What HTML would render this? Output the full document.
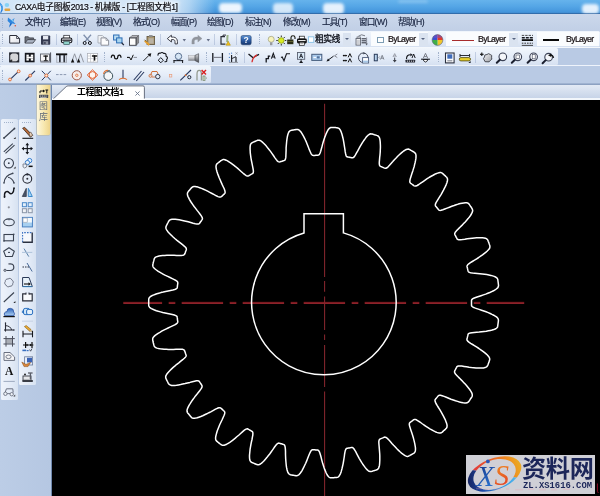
<!DOCTYPE html>
<html><head><meta charset="utf-8"><title>CAXA</title>
<style>

html,body{margin:0;padding:0}
body{width:600px;height:496px;overflow:hidden;background:#b8c9e3;font-family:"Liberation Sans","Noto Sans CJK SC",sans-serif;font-size:8.5px;color:#1b2542;line-height:1}
#app{position:relative;width:600px;height:496px;overflow:hidden;background:#b8c9e3}
.a{position:absolute}
.t{position:absolute;white-space:nowrap;letter-spacing:-0.35px;will-change:transform}
.tb{position:absolute;background:linear-gradient(#f1f6fc,#e4ecf8 55%,#d6e1f1);border-radius:1.5px}
.grip{position:absolute;width:1px;border-left:1px dotted #a3b3cc}
.sep{position:absolute;width:1px;background:rgba(140,160,195,.42)}
.combo{position:absolute;background:#fafcfe;height:14px;top:32px}
.dd{position:absolute;background:#dae3f0;width:7px;height:13px}
.dd:after{content:"";position:absolute;left:2.2px;top:5px;border:2.2px solid transparent;border-top:2.6px solid #55637f;border-bottom:0}
.ic{position:absolute;overflow:visible}

</style></head><body>
<svg width="0" height="0" style="position:absolute"><defs>
<linearGradient id="gHelp" x1="0" y1="0" x2="0" y2="1"><stop offset="0" stop-color="#5d92d2"/><stop offset=".5" stop-color="#2e5ea6"/><stop offset="1" stop-color="#15346a"/></linearGradient>
<linearGradient id="gCyl" x1="0" y1="0" x2="0" y2="1"><stop offset="0" stop-color="#f2f2f4"/><stop offset=".5" stop-color="#c4c6cb"/><stop offset="1" stop-color="#7c7f86"/></linearGradient>
<linearGradient id="gCone" x1="0" y1="0" x2="0" y2="1"><stop offset="0" stop-color="#d8d9dc"/><stop offset="1" stop-color="#4c4f56"/></linearGradient>
<linearGradient id="gCloud" x1="0" y1="0" x2="1" y2="1"><stop offset="0" stop-color="#f4f4f6"/><stop offset="1" stop-color="#9a9da4"/></linearGradient>
<linearGradient id="gBlue" x1="0" y1="0" x2="0" y2="1"><stop offset="0" stop-color="#2f66bd"/><stop offset="1" stop-color="#a9cdf0"/></linearGradient>
<linearGradient id="gPage" x1="0" y1="0" x2="1" y2="1"><stop offset="0" stop-color="#ffffff"/><stop offset="1" stop-color="#dfe1e8"/></linearGradient>
</defs></svg>
<div id="app">
<div class="a" style="left:0;top:0;width:600px;height:14px;background:linear-gradient(#66b3ec,#55a6e6 45%,#4596dc 85%,#3b80c2)"></div>
<div class="a" style="left:0;top:0;width:215px;height:14px;background:linear-gradient(90deg,rgba(214,231,247,.97) 0,rgba(216,232,248,.97) 80%,rgba(210,229,247,.7) 88%,rgba(180,214,244,0) 100%)"></div>
<div class="a" style="left:219px;top:2.5px;width:23px;height:10.5px;border-radius:4px;background:rgba(245,250,255,0.95);filter:blur(1.6px)"></div>
<div class="a" style="left:273px;top:3px;width:20px;height:10.5px;border-radius:4px;background:rgba(245,250,255,0.8);filter:blur(1.6px)"></div>
<div class="a" style="left:323px;top:3px;width:21px;height:10.5px;border-radius:4px;background:rgba(245,250,255,0.9);filter:blur(1.6px)"></div>
<div class="a" style="left:582px;top:4px;width:17px;height:9.5px;border-radius:4px;background:rgba(245,250,255,0.9);filter:blur(1.6px)"></div>
<div class="a" style="left:150px;top:1px;width:30px;height:4px;border-radius:4px;background:rgba(245,250,255,0.4);filter:blur(1.6px)"></div>
<div class="a" style="left:398px;top:0px;width:30px;height:3px;border-radius:4px;background:rgba(245,250,255,0.25);filter:blur(1.6px)"></div>
<div class="a" style="left:0;top:12.6px;width:600px;height:1px;background:rgba(40,90,150,.55)"></div>
<div class="a" style="left:0;top:13.5px;width:600px;height:1px;background:rgba(235,243,252,.9)"></div>
<div class="t" style="left:14.7px;top:2.9px;font-size:8.60px;color:#0a0a10;letter-spacing:-0.4px;-webkit-text-stroke:.22px #0a0a10;text-shadow:0 0 3px #fff,0 0 4px #fff;">CAXA<span style="letter-spacing:-0.1px">电子图板</span>2013 - <span style="letter-spacing:-0.1px">机械版</span> - [<span style="letter-spacing:-0.1px">工程图文档</span>1]</div>
<svg class="a" style="left:0;top:0" width="20" height="14" viewBox="0 0 20 14"><path d="M0,2.6Q5.4,7.4 1.4,12.8L0,12.8Q2.6,8 0,4.4Z" fill="#2f7fdc"/><path d="M.2,3.4Q3.4,6.4 1.8,10" stroke="#59b8f2" stroke-width=".9" fill="none"/><ellipse cx="6.9" cy="5" rx="2.3" ry="2" fill="#86d2f6"/><rect x="4.6" y="8.4" width="5.6" height="2.6" rx=".8" fill="#e29a2a" opacity=".9"/></svg>
<div class="a" style="left:0;top:13.9px;width:600px;height:17px;background:linear-gradient(#ccd8eb,#c5d3e8 60%,#c1cfe6)"></div>
<div class="grip" style="left:2px;top:18px;height:10px"></div>
<svg class="a" style="left:6px;top:15px" width="14" height="15" viewBox="6 15 14 15"><path d="M8,17.6L11.6,20.2L14.6,18L13.2,21.6L15.6,24L12.2,23.6L9,27.8L10,23.2L7.6,21Z" fill="#2f86de"/><path d="M11.4,20.4L13.6,19.2L12.6,21.8Z" fill="#7fd0f6"/><path d="M9.4,26.8L10.4,23.4L11.8,23.6Z" fill="#1b59b4"/><circle cx="15.3" cy="25.7" r=".8" fill="#e05030"/></svg>
<div class="t" style="left:24.6px;top:17.9px;font-size:8.60px;color:#18233f;-webkit-text-stroke:.18px #18233f;"><span style="letter-spacing:-0.87px">文件</span>(F)</div>
<div class="t" style="left:59.6px;top:17.9px;font-size:8.60px;color:#18233f;-webkit-text-stroke:.18px #18233f;"><span style="letter-spacing:-0.87px">编辑</span>(E)</div>
<div class="t" style="left:96.0px;top:17.9px;font-size:8.60px;color:#18233f;-webkit-text-stroke:.18px #18233f;"><span style="letter-spacing:-0.87px">视图</span>(V)</div>
<div class="t" style="left:133.0px;top:17.9px;font-size:8.60px;color:#18233f;-webkit-text-stroke:.18px #18233f;"><span style="letter-spacing:-0.87px">格式</span>(O)</div>
<div class="t" style="left:170.6px;top:17.9px;font-size:8.60px;color:#18233f;-webkit-text-stroke:.18px #18233f;"><span style="letter-spacing:-0.87px">幅面</span>(P)</div>
<div class="t" style="left:207.0px;top:17.9px;font-size:8.60px;color:#18233f;-webkit-text-stroke:.18px #18233f;"><span style="letter-spacing:-0.87px">绘图</span>(D)</div>
<div class="t" style="left:245.0px;top:17.9px;font-size:8.60px;color:#18233f;-webkit-text-stroke:.18px #18233f;"><span style="letter-spacing:-0.87px">标注</span>(N)</div>
<div class="t" style="left:283.0px;top:17.9px;font-size:8.60px;color:#18233f;-webkit-text-stroke:.18px #18233f;"><span style="letter-spacing:-0.87px">修改</span>(M)</div>
<div class="t" style="left:321.6px;top:17.9px;font-size:8.60px;color:#18233f;-webkit-text-stroke:.18px #18233f;"><span style="letter-spacing:-0.87px">工具</span>(T)</div>
<div class="t" style="left:359.0px;top:17.9px;font-size:8.60px;color:#18233f;-webkit-text-stroke:.18px #18233f;"><span style="letter-spacing:-0.87px">窗口</span>(W)</div>
<div class="t" style="left:398.0px;top:17.9px;font-size:8.60px;color:#18233f;-webkit-text-stroke:.18px #18233f;"><span style="letter-spacing:-0.87px">帮助</span>(H)</div>
<div class="a" style="left:0;top:31px;width:600px;height:54px;background:#b9cae4"></div>
<div class="tb" style="left:0;top:30.8px;width:600px;height:16.6px"></div>
<div class="tb" style="left:0;top:48.4px;width:557.5px;height:16.8px"></div>
<div class="tb" style="left:0;top:66px;width:210.5px;height:17.2px"></div>
<div class="a" style="left:0;top:47.4px;width:600px;height:1px;background:#f4f8fd"></div>
<div class="a" style="left:0;top:65.2px;width:600px;height:.8px;background:#eef3fb"></div>
<div class="grip" style="left:2px;top:34px;height:10px"></div>
<div class="grip" style="left:259px;top:34px;height:10px"></div>
<div class="grip" style="left:2px;top:52px;height:10px"></div>
<div class="grip" style="left:104px;top:52px;height:10px"></div>
<div class="grip" style="left:206px;top:52px;height:10px"></div>
<div class="grip" style="left:438px;top:52px;height:10px"></div>
<div class="grip" style="left:2px;top:70px;height:10px"></div>
<div class="sep" style="left:55.5px;top:34px;height:11px"></div>
<div class="sep" style="left:77px;top:34px;height:11px"></div>
<div class="sep" style="left:160px;top:34px;height:11px"></div>
<div class="sep" style="left:214px;top:34px;height:11px"></div>
<div class="sep" style="left:235.5px;top:34px;height:11px"></div>
<div class="sep" style="left:243.5px;top:52px;height:11px"></div>
<div class="sep" style="left:475px;top:52px;height:11px"></div>
<div class="t" style="left:315.4px;top:35.2px;font-size:8.80px;color:#0c0f18;letter-spacing:-0.53px;-webkit-text-stroke:.3px #0c0f18;">粗实线</div>
<div class="dd" style="left:342.6px;top:33px;width:8.4px"></div>
<div class="combo" style="left:371px;width:57px"></div>
<div class="a" style="left:377.2px;top:36.9px;width:5px;height:4.6px;background:#fff;border:.9px solid #7d9db4"></div>
<div class="t" style="left:388.0px;top:35.2px;font-size:8.70px;color:#140d10;letter-spacing:-0.62px;-webkit-text-stroke:.2px #140d10;">ByLayer</div>
<div class="dd" style="left:419px;top:33px;width:8.5px"></div>
<div class="combo" style="left:446px;width:72px"></div>
<div class="a" style="left:452px;top:39.9px;width:21.5px;height:1.1px;background:#a82c2c"></div>
<div class="t" style="left:478.0px;top:35.2px;font-size:8.70px;color:#140d10;letter-spacing:-0.62px;-webkit-text-stroke:.2px #140d10;">ByLayer</div>
<div class="dd" style="left:509.4px;top:33px;width:8.2px"></div>
<div class="combo" style="left:537px;width:62px"></div>
<div class="a" style="left:542.6px;top:39px;width:16.6px;height:2.1px;background:#0a0a0a"></div>
<div class="t" style="left:566.0px;top:35.2px;font-size:8.70px;color:#140d10;letter-spacing:-0.62px;-webkit-text-stroke:.2px #140d10;">ByLayer</div>
<div class="a" style="left:0;top:83.4px;width:600px;height:1.8px;background:linear-gradient(#a9bcd9,#8398ba)"></div>
<div class="a" style="left:52px;top:85px;width:548px;height:14.6px;background:linear-gradient(#e3eaf5,#d0dbec 60%,#c3d0e6)"></div>
<div class="a" style="left:52px;top:98.4px;width:548px;height:1.2px;background:#f2f6fb"></div>
<div class="a" style="left:0;top:85px;width:52px;height:411px;background:linear-gradient(90deg,#bccde6,#b5c7e2)"></div>
<div class="a" style="left:51px;top:85px;width:1px;height:411px;background:#6f87ad"></div>
<svg class="a" style="left:50px;top:84px" width="100" height="17" viewBox="0 0 100 17"><path d="M2.6,15.6 L16.2,2.6 Q17,1.9 18.2,1.9 L93,1.9 Q94.4,1.9 94.4,3.3 L94.4,15.6 Z" fill="#fff" stroke="#596172" stroke-width=".9"/><rect x="2" y="14.6" width="93" height="2" fill="#fff"/></svg>
<div class="t" style="left:77.0px;top:88.2px;font-size:8.90px;color:#000;font-weight:bold;"><span style="letter-spacing:-0.48px">工程图文档</span>1</div>
<svg class="a" style="left:134.8px;top:91.2px" width="5" height="5" viewBox="0 0 5 5"><path d="M.4,.4L4.6,4.6M4.6,.4L.4,4.6" stroke="#69748a" stroke-width=".9" fill="none"/></svg>
<div class="a" style="left:37.2px;top:85px;width:12.8px;height:49.8px;background:linear-gradient(90deg,#fdf6dc,#f7e7ae 55%,#eed48a);border-radius:0 0 1.5px 1.5px;box-shadow:0 0 0 .5px rgba(190,170,110,.6)"></div>
<div class="t" style="left:39.4px;top:102.4px;font-size:8.90px;color:#5c6676;">图</div>
<div class="t" style="left:39.4px;top:112.6px;font-size:8.90px;color:#5c6676;">库</div>
<div class="tb" style="left:1px;top:119px;width:16.8px;height:281.3px;background:linear-gradient(90deg,#eef3fb,#e3ebf7 60%,#d7e2f1)"></div>
<div class="tb" style="left:19.2px;top:119px;width:16.8px;height:265.5px;background:linear-gradient(90deg,#eef3fb,#e3ebf7 60%,#d7e2f1)"></div>
<div class="a" style="left:4px;top:122.3px;width:9px;height:1px;border-top:1px dotted #a3b3cc"></div>
<div class="a" style="left:22px;top:122.3px;width:9px;height:1px;border-top:1px dotted #a3b3cc"></div><svg class="a" style="left:0;top:0" width="600" height="496" viewBox="0 0 600 496"><path d="M9.7,35.5H16.6L19.6,38.5V43.1H9.7Z" fill="url(#gPage)" stroke="#2c2f3b" stroke-width="1" />
<path d="M16.6,35.5V38.5H19.6" fill="none" stroke="#2c2f3b" stroke-width="0.8" />
<path d="M25,43V36.8H28.4L29.4,37.9H33.6V39.6" fill="#70757f" stroke="#33363f" stroke-width="0.8" />
<path d="M25,43.1L27.6,39.6H35.6L33,43.1Z" fill="#aab3c3" stroke="#33363f" stroke-width="0.8" />
<rect x="41" y="35.5" width="9.2" height="9.2" fill="#343a50" rx="0.8" />
<rect x="43" y="36" width="5.2" height="3.4" fill="#e6e9f1" />
<rect x="43.4" y="41.2" width="4.8" height="3.5" fill="#8d93a3" />
<rect x="44.2" y="41.9" width="1.4" height="2.2" fill="#343a50" />
<rect x="63.8" y="35.3" width="5.6" height="3.2" fill="#fff" stroke="#1d1f27" stroke-width="0.7" />
<rect x="61.4" y="38" width="10.4" height="4.8" fill="#ebebef" stroke="#14161c" stroke-width="1.1" rx="1.6" />
<rect x="62.2" y="39.6" width="8.8" height="1.2" fill="#1a1c24" />
<rect x="63.8" y="41.6" width="5.6" height="3" fill="#8fd2ca" stroke="#27474a" stroke-width="0.6" />
<path d="M83.6,34.8L89.6,41.6" stroke="#7d8eab" stroke-width="1.3" fill="none" />
<path d="M91,34.8L85,41.6" stroke="#7d8eab" stroke-width="1.3" fill="none" />
<circle cx="84.7" cy="43" r="1.5" fill="none" stroke="#14161c" stroke-width="1" />
<circle cx="89.9" cy="43" r="1.5" fill="none" stroke="#14161c" stroke-width="1" />
<path d="M98,35.5H102.4L104.4,37.5V43H98Z" fill="#f0f2f5" stroke="#a0a4ae" stroke-width="0.8" />
<path d="M101,37.9H106L108.6,40.4V45.2H101Z" fill="#fcfcfd" stroke="#838791" stroke-width="0.9" />
<path d="M106,37.9V40.4H108.6" fill="none" stroke="#838791" stroke-width="0.7" />
<rect x="113.6" y="35" width="5.4" height="5" fill="#bcdef3" stroke="#2a6cb4" stroke-width="1" />
<rect x="116.6" y="37.9" width="5.4" height="5" fill="#a9d5ef" stroke="#2a6cb4" stroke-width="1" />
<path d="M121.6,42.6L123.8,45.2" stroke="#20283a" stroke-width="1.3" fill="none" />
<path d="M129.5,38L132,35.5H138.6L136,38Z" fill="#b4b4b8" stroke="#55575c" stroke-width="0.6" />
<path d="M136,38L138.6,35.5V43L136,45.3Z" fill="#8c8c8f" stroke="#55575c" stroke-width="0.6" />
<rect x="129.5" y="38" width="6.5" height="7.3" fill="#fdfdfd" stroke="#3a3c44" stroke-width="0.9" />
<rect x="147" y="36.5" width="7.6" height="8" fill="#a8946c" stroke="#5c5038" stroke-width="0.8" />
<rect x="149" y="35.1" width="3.6" height="1.9" fill="#8a8a8a" />
<rect x="148.6" y="38.2" width="5" height="5.4" fill="#bab2a2" />
<path d="M144.8,40.8L149.2,45" stroke="#e8a030" stroke-width="1.9" fill="none" />
<path d="M144.6,39.8L146.4,41.6" stroke="#6a5a30" stroke-width="1" fill="none" />
<path d="M167.3,38.6L171.4,35.2V37.1H173.4C176,37.1 177.4,39.4 177.4,41.4V43.9H175V41.6C175,40.4 174.4,39.6 173.2,39.6H171.4V42Z" fill="#fff" stroke="#2a2d38" stroke-width="0.9" stroke-linejoin="round"/>
<path d="M182.6,39L186,39L184.3,41.4Z" fill="#667088" />
<path d="M167.3,38.6L171.4,35.2V37.1H173.4C176,37.1 177.4,39.4 177.4,41.4V43.9H175V41.6C175,40.4 174.4,39.6 173.2,39.6H171.4V42Z" fill="#91959d" stroke="#91959d" stroke-width="0.4" transform="translate(369.3,0) scale(-1,1)"/>
<path d="M206.6,39L210,39L208.3,41.4Z" fill="#667088" />
<path d="M225,36.6H221V44.2H225.4" fill="none" stroke="#2a2d38" stroke-width="1.2" />
<path d="M223,36.6V35.1H226" fill="none" stroke="#2a2d38" stroke-width="1" />
<path d="M227.6,35L227.1,42" stroke="#9cb48c" stroke-width="2" fill="none" />
<path d="M226,45.2L228.2,41.2L230.4,45.2Z" fill="#f2c21c" stroke="#a88400" stroke-width="0.5" />
<rect x="241" y="35.5" width="10.2" height="9.3" fill="url(#gHelp)" stroke="#1b3763" stroke-width="0.5" rx="1.7" />
<text x="246.1" y="43.1" font-family="Liberation Sans,sans-serif" font-weight="bold" font-size="8.6" fill="#fff" text-anchor="middle">?</text>
<circle cx="271.2" cy="39.3" r="3" fill="#f7f3ba" stroke="#a6a686" stroke-width="0.8" />
<rect x="270" y="42.3" width="2.4" height="2.9" fill="#989a9e" />
<path d="M284.8,40.5L286.3,40.5" stroke="#1c1c10" stroke-width="0.9" fill="none" />
<path d="M283.775,42.9749L284.836,44.0355" stroke="#1c1c10" stroke-width="0.9" fill="none" />
<path d="M281.3,44L281.3,45.5" stroke="#1c1c10" stroke-width="0.9" fill="none" />
<path d="M278.825,42.9749L277.764,44.0355" stroke="#1c1c10" stroke-width="0.9" fill="none" />
<path d="M277.8,40.5L276.3,40.5" stroke="#1c1c10" stroke-width="0.9" fill="none" />
<path d="M278.825,38.0251L277.764,36.9645" stroke="#1c1c10" stroke-width="0.9" fill="none" />
<path d="M281.3,37L281.3,35.5" stroke="#1c1c10" stroke-width="0.9" fill="none" />
<path d="M283.775,38.0251L284.836,36.9645" stroke="#1c1c10" stroke-width="0.9" fill="none" />
<circle cx="281.3" cy="40.5" r="2.8" fill="#d8ec24" stroke="#8a9a10" stroke-width="0.8" />
<path d="M291,39.6V37.6Q291,35.8 293,35.8Q295,35.8 295,37.6V39" fill="none" stroke="#15160c" stroke-width="1.1" />
<rect x="287.2" y="39.5" width="6.2" height="4.7" fill="#2b2d16" />
<rect x="287.2" y="41.1" width="6.2" height="0.7" fill="#77793f" />
<rect x="299.3" y="36.2" width="5" height="2.8" fill="#fff" stroke="#111" stroke-width="0.7" />
<rect x="297" y="38.6" width="9.8" height="4.8" fill="#111" rx="1.4" />
<rect x="298.2" y="40.1" width="7.4" height="1" fill="#fff" />
<rect x="299.3" y="42.2" width="5" height="3.1" fill="#fff" stroke="#111" stroke-width="0.7" />
<path d="M300.3,43.6L303.3,43.6" stroke="#555" stroke-width="0.5" fill="none" />
<rect x="308.4" y="36.8" width="5.4" height="5.6" fill="#fff" stroke="#8fc4e6" stroke-width="1" />
<rect x="357" y="36.9" width="3.6" height="1.8" fill="#cfd1d6" stroke="#5a5f6a" stroke-width="0.6" />
<rect x="356" y="38.5" width="4.6" height="6.6" fill="#eaebee" stroke="#5a5f6a" stroke-width="0.8" />
<path d="M356.8,41L359.8,41" stroke="#8a8e98" stroke-width="0.6" fill="none" />
<path d="M356.8,43L359.8,43" stroke="#8a8e98" stroke-width="0.6" fill="none" />
<path d="M361.6,38.8L366,38.8" stroke="#2a2d38" stroke-width="1" fill="none" />
<path d="M361.6,40.8L366,40.8" stroke="#2a2d38" stroke-width="1" fill="none" />
<path d="M361.6,42.8L366,42.8" stroke="#2a2d38" stroke-width="1" fill="none" />
<path d="M358.4,36.2Q361.4,33.6 365,35.8" fill="none" stroke="#5a5f6a" stroke-width="0.8" />
<path d="M366.6,37.5V44.6" fill="none" stroke="#5a5f6a" stroke-width="0.7" />
<path d="M365.4,43.6L367.8,43.6L366.6,45.6Z" fill="#5a5f6a" />
<path d="M437.5,40L432.1,40A5.4,5.4 0 0 1 437.5,34.6Z" fill="#3b4fd0" />
<path d="M437.5,40L437.5,34.6A5.4,5.4 0 0 1 442.9,40Z" fill="#e23a2a" />
<path d="M437.5,40L442.9,40A5.4,5.4 0 0 1 437.5,45.4Z" fill="#f2c62a" />
<path d="M437.5,40L437.5,45.4A5.4,5.4 0 0 1 432.1,40Z" fill="#3fae48" />
<path d="M432.9,37.2A5.4,5.4 0 0 1 442.1,37.2Q437.5,39 432.9,37.2Z" fill="#7a50c0" stroke="none" stroke-width="0" opacity=".55"/>
<circle cx="437.5" cy="40" r="5.4" fill="none" stroke="#55607a" stroke-width="0.6" />
<path d="M521.8,35.4L533,35.4" stroke="#222" stroke-width="0.8" fill="none" stroke-dasharray="2.4 1"/>
<path d="M521.8,37.7L533,37.7" stroke="#15171d" stroke-width="1.6" fill="none" stroke-dasharray="3 1"/>
<path d="M521.8,40.1L533,40.1" stroke="#0c0c0c" stroke-width="1.8" fill="none" />
<path d="M521.8,43.2L533,43.2" stroke="#333" stroke-width="1" fill="none" stroke-dasharray="1.6 1"/>
<path d="M521.8,45.4L533,45.4" stroke="#333" stroke-width="0.9" fill="none" />
<rect x="9.7" y="52.9" width="9" height="9" fill="#d5d6d9" stroke="#23262f" stroke-width="1.1" />
<path d="M9.7,52.9L12.4,52.9L9.7,55.6Z" fill="#23262f" />
<path d="M18.7,52.9L16,52.9L18.7,55.6Z" fill="#23262f" />
<path d="M9.7,61.9L12.4,61.9L9.7,59.2Z" fill="#23262f" />
<path d="M18.7,61.9L16,61.9L18.7,59.2Z" fill="#23262f" />
<circle cx="11.7" cy="60.3" r="0.7" fill="#111" />
<rect x="24.8" y="52.8" width="9.8" height="9.5" fill="#15171d" />
<rect x="26.4" y="54.6" width="2.4" height="2.2" fill="#fff" />
<rect x="30.8" y="54.6" width="2.4" height="2.2" fill="#fff" />
<rect x="26.4" y="56.7" width="6.8" height="1.7" fill="#fff" />
<rect x="26.4" y="58.4" width="2.4" height="2.2" fill="#fff" />
<rect x="30.8" y="58.4" width="2.4" height="2.2" fill="#fff" />
<rect x="40.5" y="54" width="9" height="7.2" fill="#f5f5f7" stroke="#5e626c" stroke-width="0.9" />
<path d="M50.6,52.4L50.6,62.6" stroke="#4a4e58" stroke-width="1" fill="none" />
<rect x="43.4" y="55.5" width="4.6" height="1.2" fill="#111" />
<rect x="45.1" y="55.5" width="1.3" height="5" fill="#111" />
<rect x="43.8" y="60.3" width="4" height="0.9" fill="#111" />
<path d="M40.5,62.3L50.6,62.3" stroke="#8a8e98" stroke-width="0.8" fill="none" />
<rect x="56" y="53.4" width="11.2" height="1.9" fill="#111" />
<rect x="59" y="55" width="1.7" height="7.4" fill="#2e3139" />
<rect x="63.4" y="55" width="1.7" height="7.4" fill="#2e3139" />
<rect x="56.4" y="55" width="0.8" height="7.4" fill="#9a9ea8" />
<rect x="66.2" y="55" width="0.8" height="7.4" fill="#9a9ea8" />
<path d="M56.4,62.4L67,62.4" stroke="#9a9ea8" stroke-width="0.6" fill="none" />
<path d="M71.6,62.3L74.6,53.8L77.6,62.3" fill="none" stroke="#8b8f99" stroke-width="0.9" />
<path d="M71,62.6L72.7,58.6L74.3,62.6Z" fill="#111" />
<path d="M77.6,62.3L80.6,53.8L83.6,62.3" fill="none" stroke="#8b8f99" stroke-width="0.9" />
<path d="M77,62.6L78.7,58.6L80.3,62.6Z" fill="#111" />
<rect x="87.5" y="53.5" width="10.2" height="8.6" fill="#fff" stroke="#a8acb4" stroke-width="0.7" />
<path d="M87.5,56L97.7,56" stroke="#b8bcc4" stroke-width="0.6" fill="none" />
<path d="M87.5,58.6L97.7,58.6" stroke="#b8bcc4" stroke-width="0.6" fill="none" />
<path d="M90.5,53.5L90.5,62.1" stroke="#b8bcc4" stroke-width="0.6" fill="none" />
<path d="M93.5,53.5L93.5,62.1" stroke="#b8bcc4" stroke-width="0.6" fill="none" />
<rect x="92" y="55.3" width="5.2" height="1.4" fill="#111" />
<rect x="93.8" y="55.3" width="1.5" height="5.3" fill="#111" />
<path d="M111.3,57.8C111.3,54.4 114.5,54.4 114.5,57C114.5,59.6 117.8,59.6 117.8,57C117.8,54.4 121,54.4 121,57.8" fill="none" stroke="#111" stroke-width="1.25" />
<path d="M127,57.4L129.6,57.4" stroke="#111" stroke-width="1.1" fill="none" />
<path d="M129.4,57.2L131,60L133.3,54.8" fill="none" stroke="#111" stroke-width="1" />
<path d="M133.6,57.4L137,57.4" stroke="#8a8e98" stroke-width="1" fill="none" />
<path d="M143.3,61L149,55.3" stroke="#222" stroke-width="1" fill="none" />
<path d="M151.3,53.2L150.4,57.1L147.4,54.1Z" fill="#111" />
<path d="M158,55.6Q157.8,52.6 160.5,53.2Q162,51.7 163.6,53.4Q166.6,53 166,56Q168.6,57.6 166.6,59.6Q167.6,62.2 164.6,61.6" fill="none" stroke="#15171d" stroke-width="1.1" />
<path d="M158.2,60.2L160.8,57.7L163.4,60.2L160.8,62.8Z" fill="none" stroke="#15171d" stroke-width="1" />
<circle cx="178.5" cy="56.4" r="3.2" fill="#d6e6f5" stroke="#5a7090" stroke-width="1" />
<path d="M173.4,60.6L183.2,60.6" stroke="#15171d" stroke-width="1.1" fill="none" />
<path d="M174,60.6L174,63" stroke="#15171d" stroke-width="1" fill="none" />
<path d="M182.6,60.6L182.6,63" stroke="#15171d" stroke-width="1" fill="none" />
<path d="M177,59.4L176.2,60.6" stroke="#5a7090" stroke-width="0.8" fill="none" />
<path d="M180,59.4L180.8,60.6" stroke="#5a7090" stroke-width="0.8" fill="none" />
<rect x="188.5" y="55.4" width="6.6" height="5.2" fill="url(#gCyl)" stroke="#8a8c92" stroke-width="0.4" />
<path d="M195,55.4L198.6,53.7V62.4L195,60.6Z" fill="url(#gCone)" stroke="#3a3c42" stroke-width="0.6" />
<path d="M212.8,53L212.8,62" stroke="#15171d" stroke-width="1.3" fill="none" />
<path d="M222.4,53L222.4,62" stroke="#15171d" stroke-width="1.3" fill="none" />
<path d="M213.4,57.4L221.8,57.4" stroke="#7a7e88" stroke-width="1.1" fill="none" />
<path d="M231.6,55L231.6,62" stroke="#15171d" stroke-width="1.1" fill="none" />
<path d="M236,57L236,62" stroke="#15171d" stroke-width="1.1" fill="none" />
<path d="M231.8,58.6L236,56.6" stroke="#15171d" stroke-width="0.9" fill="none" />
<circle cx="229.4" cy="53.8" r="0.65" fill="#4a80c8" />
<circle cx="229.4" cy="57.4" r="0.65" fill="#4a80c8" />
<circle cx="229.4" cy="61" r="0.65" fill="#4a80c8" />
<circle cx="231.6" cy="53.2" r="0.6" fill="#4a80c8" />
<path d="M235.4,52.4L237.6,54.4" stroke="#8a8e98" stroke-width="0.7" fill="none" />
<path d="M237.6,52.4L235.4,54.4" stroke="#8a8e98" stroke-width="0.7" fill="none" />
<path d="M229,62.4L238,62.4" stroke="#8a8e98" stroke-width="0.9" fill="none" />
<path d="M248.5,54L253.4,58" stroke="#15171d" stroke-width="1.4" fill="none" />
<path d="M259,54.3L254,56.9" stroke="#15171d" stroke-width="1.3" fill="none" />
<path d="M252,62.2Q252.4,57.6 257,54.9" fill="none" stroke="#d83030" stroke-width="1.3" />
<path d="M266.2,62.4V58.6H268.4V56.2H270.2" fill="none" stroke="#15171d" stroke-width="1.3" />
<path d="M271.4,58.6L273.3,53.4L275.2,58.6M272,57H274.6" fill="none" stroke="#15171d" stroke-width="1.1" />
<path d="M281,57.6L282.2,57L284,60.8L286.5,53.8H290" fill="none" stroke="#15171d" stroke-width="1.1" />
<rect x="297.5" y="52.5" width="7.2" height="6.8" fill="#d9e9f7" stroke="#5a6070" stroke-width="0.9" />
<path d="M299.5,58L301.1,53.8L302.7,58M300.1,56.6H302.1" fill="none" stroke="#20232c" stroke-width="0.9" />
<path d="M301.1,59.3L301.1,60.6" stroke="#15171d" stroke-width="0.9" fill="none" />
<path d="M299.1,63.1L301.1,60.2L303.1,63.1Z" fill="#15171d" />
<rect x="311.8" y="54.3" width="10" height="6.1" fill="#a9c9ea" stroke="#465c7c" stroke-width="1" />
<path d="M313.4,57.4L316,57.4" stroke="#fff" stroke-width="1" fill="none" />
<rect x="317" y="56.3" width="2.6" height="2.1" fill="#54729c" />
<rect x="320" y="56.5" width="1" height="1.6" fill="#fff" />
<path d="M327.8,60.3L333.6,56.1" stroke="#15171d" stroke-width="1" fill="none" />
<path d="M326.4,61.4L329.7,60.7L328,58.5Z" fill="#15171d" />
<path d="M337.3,54L334.5,55.8L337.3,57.6" fill="none" stroke="#7a7e88" stroke-width="0.9" />
<path d="M343,55.6L346.6,55.6" stroke="#111" stroke-width="1" fill="none" />
<path d="M342.6,55.6L344.2,54.4L344.2,56.8Z" fill="#111" />
<path d="M347.2,55.6L345.6,54.4L345.6,56.8Z" fill="#111" />
<path d="M348.2,57.3L349.9,53.6L351.6,57.3" fill="none" stroke="#111" stroke-width="1" />
<path d="M343,60.6L346.6,60.6" stroke="#111" stroke-width="1" fill="none" />
<path d="M342.6,60.6L344.2,59.4L344.2,61.8Z" fill="#111" />
<path d="M347.2,60.6L345.6,59.4L345.6,61.8Z" fill="#111" />
<path d="M348.2,62.3L349.9,58.6L351.6,62.3" fill="none" stroke="#111" stroke-width="1" />
<circle cx="363.3" cy="57.8" r="4.8" fill="none" stroke="#3a4050" stroke-width="1" />
<path d="M363.2,52.2L365.6,53.3L363.4,54.4Z" fill="#3a4050" />
<rect x="362.6" y="57.6" width="6" height="5.4" fill="#fff" stroke="#4a5a78" stroke-width="0.9" />
<rect x="363.1" y="60.6" width="5" height="2" fill="#a8c8e8" />
<rect x="374.3" y="54.3" width="3" height="6.5" fill="#b9d5ef" stroke="#2a3a58" stroke-width="1" />
<path d="M379.8,56.4L378.8,57.5L379.8,58.6" fill="none" stroke="#7a7e88" stroke-width="0.7" />
<path d="M380.5,59.5L382.2,55.3L383.9,59.5M381.1,58.2H383.3" fill="none" stroke="#6a6e78" stroke-width="0.8" />
<path d="M393,57L394.7,53.6L396.4,57M393.6,56H395.8" fill="none" stroke="#8a8e98" stroke-width="0.8" />
<path d="M394.7,57.6L394.7,61" stroke="#3a3d46" stroke-width="1" fill="none" />
<path d="M392.8,60L396.6,60L394.7,62.4Z" fill="#3a3d46" />
<path d="M406.5,59Q406.4,54.6 410.6,54.8" fill="none" stroke="#15171d" stroke-width="1.1" />
<path d="M412.6,54.8L410.4,53.2L410.4,56.4Z" fill="#15171d" />
<path d="M412,58L413.6,54L415.2,58" fill="none" stroke="#15171d" stroke-width="1" />
<rect x="405.5" y="59.8" width="9.6" height="2.7" fill="#2a2d38" rx="0.5" />
<rect x="407" y="60.6" width="0.8" height="1.1" fill="#fff" />
<rect x="409" y="60.6" width="0.8" height="1.1" fill="#fff" />
<rect x="411" y="60.6" width="0.8" height="1.1" fill="#fff" />
<rect x="413" y="60.6" width="0.8" height="1.1" fill="#fff" />
<path d="M423.3,58.2L425.5,53.3L427.7,58.2M424.2,56.6H426.8" fill="none" stroke="#7a7e88" stroke-width="1" />
<path d="M421,59.2L430,59.2" stroke="#15171d" stroke-width="1" fill="none" />
<path d="M423,59.5Q425.5,64.6 428,59.5Z" fill="#fff" stroke="#15171d" stroke-width="0.9" />
<rect x="445.5" y="53" width="8.6" height="9.9" fill="#fdfdfd" stroke="#2a3040" stroke-width="1.1" />
<rect x="447.3" y="54.3" width="5" height="4.4" fill="#3f6cba" />
<rect x="447.3" y="60" width="5" height="1.5" fill="#a0a4ae" />
<path d="M460,55.5L469.6,55.5" stroke="#15171d" stroke-width="0.9" fill="none" />
<path d="M460,54L460,57" stroke="#15171d" stroke-width="0.9" fill="none" />
<path d="M469.6,54L469.6,57" stroke="#15171d" stroke-width="0.9" fill="none" />
<rect x="459.3" y="57.6" width="11.2" height="3.3" fill="#ead02a" stroke="#4a4410" stroke-width="0.8" rx="1.6" />
<path d="M468.4,63L470.6,63L470.6,60.9Z" fill="#15171d" />
<path d="M480,54.3L483.6,54.3" stroke="#111" stroke-width="1.1" fill="none" />
<path d="M481.8,52.5L481.8,56.1" stroke="#111" stroke-width="1.1" fill="none" />
<path d="M484.5,57Q484,54.2 487,54.5Q488.5,52.8 490.3,54.5Q492.5,55 491.6,57.3Q492.6,59.5 490.5,60.3Q489.5,62.6 487,61.8Q484.5,62.5 484.2,60Q482.6,58.3 484.5,57Z" fill="url(#gCloud)" stroke="#3a3d46" stroke-width="0.9" />
<circle cx="502.8" cy="56.8" r="3.8" fill="#f4f6fa" stroke="#3a4054" stroke-width="1.1" />
<path d="M499.9,59.7L496.8,62.8" stroke="#1c2030" stroke-width="2" fill="none" stroke-linecap="round"/>
<circle cx="517.8" cy="56.8" r="3.8" fill="#f4f6fa" stroke="#3a4054" stroke-width="1.1" />
<path d="M514.9,59.7L511.8,62.8" stroke="#1c2030" stroke-width="2" fill="none" stroke-linecap="round"/>
<rect x="516" y="55" width="3.6" height="3.5" fill="#fff" stroke="#5a6070" stroke-width="0.7" />
<circle cx="533.6" cy="56.8" r="3.8" fill="#f4f6fa" stroke="#3a4054" stroke-width="1.1" />
<path d="M530.7,59.7L527.6,62.8" stroke="#1c2030" stroke-width="2" fill="none" stroke-linecap="round"/>
<rect x="532.2" y="54.6" width="3" height="4.2" fill="#fff" stroke="#3a4054" stroke-width="0.6" />
<circle cx="548.6" cy="57.2" r="3.8" fill="#f4f6fa" stroke="#3a4054" stroke-width="1.1" />
<path d="M545.7,60.1L542.6,63.2" stroke="#1c2030" stroke-width="2" fill="none" stroke-linecap="round"/>
<path d="M550,55.2Q552.8,54.8 553.6,57.8" fill="none" stroke="#111" stroke-width="1.2" />
<path d="M548,55.2L551.2,53.4L551.2,57Z" fill="#111" />
<path d="M11,78.7L17.8,72.1" stroke="#2a3a60" stroke-width="1.1" fill="none" />
<circle cx="10" cy="79.5" r="1.4" fill="#fbe8dc" stroke="#e06a30" stroke-width="0.9" />
<circle cx="18.7" cy="71.3" r="1.4" fill="#fbe8dc" stroke="#e06a30" stroke-width="0.9" />
<path d="M25.3,80.5L35,70.8" stroke="#2a3a60" stroke-width="1.1" fill="none" />
<circle cx="30.2" cy="75.6" r="1.4" fill="#f8d8c4" stroke="#e06a30" stroke-width="0.9" />
<path d="M41.8,70.8L50.8,80.3" stroke="#2a3a60" stroke-width="1" fill="none" />
<path d="M50.8,70.8L41.8,80.3" stroke="#2a3a60" stroke-width="1" fill="none" />
<circle cx="46.3" cy="75.5" r="1.5" fill="#fbe8dc" stroke="#e06a30" stroke-width="0.9" />
<path d="M56,74.6L67,74.6" stroke="#8a98b0" stroke-width="1" fill="none" stroke-dasharray="2.6 1.2"/>
<circle cx="76.8" cy="75.3" r="4.6" fill="#f7edea" stroke="#9c5848" stroke-width="1" />
<circle cx="76.8" cy="75.3" r="1.2" fill="none" stroke="#e06a30" stroke-width="0.8" />
<path d="M92.5,69.8L97.8,75L92.5,80.2L87.2,75Z" fill="none" stroke="#e06030" stroke-width="1" />
<circle cx="92.5" cy="75" r="3.4" fill="#fdf4ee" stroke="#e06030" stroke-width="1" />
<circle cx="108.3" cy="76" r="4.4" fill="#f4f6f8" stroke="#3a5058" stroke-width="1" />
<path d="M103.6,74Q104,70.6 108,70.4" fill="none" stroke="#e07030" stroke-width="1.1" />
<path d="M108,70.6Q110,70 110.6,71.6" fill="none" stroke="#3a5058" stroke-width="0.8" />
<path d="M123,69.8L123,78.3" stroke="#2a3a60" stroke-width="1.1" fill="none" />
<path d="M119,79.6Q123,77 127,79.6" fill="none" stroke="#e07030" stroke-width="1.1" />
<path d="M133.8,80L141.5,71" stroke="#2a3a60" stroke-width="1.1" fill="none" />
<path d="M136.3,81L144,72" stroke="#2a3a60" stroke-width="1.1" fill="none" />
<path d="M150.6,75.4L152,71.5H157L158,74" fill="none" stroke="#d0703a" stroke-width="1" />
<circle cx="150.5" cy="75.8" r="1.5" fill="none" stroke="#d0703a" stroke-width="0.9" />
<path d="M151.8,77L155.6,77" stroke="#d0703a" stroke-width="0.9" fill="none" />
<circle cx="157.8" cy="76.6" r="2.2" fill="none" stroke="#303848" stroke-width="1" />
<rect x="169.4" y="74.4" width="2.4" height="2.6" fill="none" stroke="#ea9c78" stroke-width="0.7" />
<path d="M180.3,80.3L191,70" stroke="#2a3a60" stroke-width="1.1" fill="none" />
<circle cx="189.3" cy="77.2" r="1.6" fill="none" stroke="#20283a" stroke-width="1" />
<circle cx="185.6" cy="75.2" r="0.9" fill="#e07030" />
<path d="M197,80.6V74Q197,70.4 199.2,70.4Q201.4,70.4 201.4,74V80.6" fill="none" stroke="#929a8e" stroke-width="1.25" />
<path d="M201.6,70L206,74.4" stroke="#d82020" stroke-width="1.4" fill="none" />
<path d="M206,70L201.6,74.4" stroke="#d82020" stroke-width="1.4" fill="none" />
<rect x="203" y="76" width="2" height="4.4" fill="#d8e8d0" stroke="#7a8a70" stroke-width="0.8" />
<circle cx="206.4" cy="78" r="0.6" fill="#7a8a70" />
<path d="M40,93.2V91H43.4" fill="none" stroke="#111" stroke-width="1" />
<path d="M43,89.4L45.2,91L43,92.6Z" fill="#111" />
<path d="M45.4,90L48.2,90" stroke="#111" stroke-width="1" fill="none" />
<path d="M46.8,90L46.8,93.4" stroke="#111" stroke-width="1" fill="none" />
<rect x="39" y="94.8" width="9.2" height="3.3" fill="#4a4c52" rx="0.5" />
<rect x="40.2" y="95.6" width="0.9" height="0.9" fill="#e8e8e8" />
<rect x="42" y="95.6" width="0.9" height="0.9" fill="#e8e8e8" />
<rect x="43.8" y="95.6" width="0.9" height="0.9" fill="#e8e8e8" />
<rect x="45.6" y="95.6" width="0.9" height="0.9" fill="#e8e8e8" />
<rect x="40.2" y="97" width="6.4" height="0.6" fill="#e8e8e8" />
<path d="M4,138L14.5,128.5" stroke="#3a4250" stroke-width="1.2" fill="none" />
<circle cx="4" cy="138" r="0.9" fill="#3a4250" />
<circle cx="14.5" cy="128.5" r="0.9" fill="#3a4250" />
<path d="M13.6,138.9L15.6,138.9L15.6,136.9Z" fill="#222" />
<path d="M3.8,151.8L12.8,143.6" stroke="#3a4250" stroke-width="1.1" fill="none" />
<path d="M5.5,153.3L14.5,145.1" stroke="#3a4250" stroke-width="1.1" fill="none" />
<circle cx="8.8" cy="163.2" r="4.7" fill="none" stroke="#3a4250" stroke-width="1.1" />
<circle cx="8.8" cy="163.2" r="0.9" fill="#3a4250" />
<path d="M13.6,168.4L15.6,168.4L15.6,166.4Z" fill="#222" />
<path d="M4,183Q4.6,175.4 12.6,173.4" fill="none" stroke="#3a4250" stroke-width="1.1" />
<path d="M8,177.2Q12.4,178 14,183" fill="none" stroke="#3a4250" stroke-width="1.1" />
<circle cx="4" cy="183" r="0.8" fill="#3a4250" />
<circle cx="12.8" cy="173.4" r="0.8" fill="#3a4250" />
<circle cx="14" cy="183" r="0.8" fill="#3a4250" />
<path d="M4.6,197C3.8,191.2 7.2,190.6 9.2,192.8C11.2,195 13.8,193.2 13.9,188.4" fill="none" stroke="#15171d" stroke-width="1.4" />
<circle cx="4.5" cy="197" r="0.9" fill="#15171d" />
<circle cx="14" cy="188.2" r="0.9" fill="#15171d" />
<circle cx="8.8" cy="207.3" r="1.1" fill="#8a8e98" />
<ellipse cx="9" cy="222.3" rx="5.3" ry="3.4" fill="none" stroke="#3a4250" stroke-width="1.1"/>
<path d="M8,219.2L9,220.2L10,219.2" fill="none" stroke="#3a4250" stroke-width="0.8" />
<rect x="4" y="234.5" width="9.5" height="6.3" fill="none" stroke="#3a4250" stroke-width="1.1" />
<circle cx="13.8" cy="234.2" r="0.8" fill="#3a4250" />
<circle cx="4" cy="241" r="0.8" fill="#3a4250" />
<path d="M9,247.7L14.3,251.3L12.3,256.5H5.7L3.7,251.3Z" fill="none" stroke="#3a4250" stroke-width="1.1" />
<path d="M8,252.4L10,252.4" stroke="#3a4250" stroke-width="1" fill="none" />
<path d="M8.4,264Q13.6,263 13.8,267Q14,270.6 10,270.5H6.4" fill="none" stroke="#3a4250" stroke-width="1.2" />
<circle cx="5" cy="270.3" r="1.1" fill="none" stroke="#3a4250" stroke-width="0.9" />
<path d="M12.7,283.7A2.3,2.3 0 0 1 9.9,286.2A2.3,2.3 0 0 1 6.1,285.1A2.3,2.3 0 0 1 5.3,281.5A2.3,2.3 0 0 1 8.1,279.0A2.3,2.3 0 0 1 11.9,280.1A2.3,2.3 0 0 1 12.7,283.7Z" fill="none" stroke="#6a7080" stroke-width="1" />
<path d="M3.8,302L14,292.5" stroke="#3a4250" stroke-width="1.1" fill="none" />
<path d="M13.4,302.9L15.4,302.9L15.4,300.9Z" fill="#222" />
<path d="M4.6,315.6Q3.4,312 7,311.6Q7,308 10.6,308.4Q14,308.6 13.6,312Q15.2,313 14,315.6Z" fill="url(#gBlue)" stroke="#2a50a0" stroke-width="0.8" />
<path d="M3.4,316.6L14.8,316.6" stroke="#111" stroke-width="1.2" fill="none" />
<path d="M5.5,323L5.5,331.6" stroke="#2a2d38" stroke-width="1.1" fill="none" />
<path d="M4,330L14,330" stroke="#2a2d38" stroke-width="1.1" fill="none" />
<path d="M5.5,325.6Q10.6,326 11.6,330" fill="none" stroke="#2a2d38" stroke-width="1" />
<circle cx="5.5" cy="323" r="0.7" fill="#2a2d38" />
<circle cx="14" cy="330" r="0.7" fill="#2a2d38" />
<rect x="6.5" y="339" width="5.6" height="4.6" fill="#a8acb4" />
<path d="M6,336L6,346.6" stroke="#4a4e5a" stroke-width="1" fill="none" />
<path d="M12.5,336L12.5,346.6" stroke="#4a4e5a" stroke-width="1" fill="none" />
<path d="M3.5,338.6L14.8,338.6" stroke="#4a4e5a" stroke-width="1" fill="none" />
<path d="M3.5,344L14.8,344" stroke="#4a4e5a" stroke-width="1" fill="none" />
<path d="M4,352.5H10L14.6,357V360.4H4Z" fill="#f5f5f7" stroke="#6a7080" stroke-width="1" />
<ellipse cx="8.5" cy="356.8" rx="2.6" ry="1.8" fill="none" stroke="#6a7080" stroke-width=".9"/>
<text x="9.1" y="375.2" font-family="Liberation Serif,serif" font-weight="bold" font-size="11.5" fill="#111" text-anchor="middle">A</text>
<path d="M3.5,381.4L14.8,381.4" stroke="#8a98b0" stroke-width="0.8" fill="none" />
<path d="M5.2,392.4L6.4,388.8H12.8L13.2,392.6" fill="none" stroke="#6a7080" stroke-width="1" />
<path d="M7,393.6L10,393.6" stroke="#6a7080" stroke-width="0.9" fill="none" />
<circle cx="5.4" cy="393.8" r="1.7" fill="#eef2f8" stroke="#6a7080" stroke-width="0.9" />
<circle cx="11.7" cy="394.2" r="1.7" fill="#eef2f8" stroke="#6a7080" stroke-width="0.9" />
<path d="M13.4,396.4L15.2,396.4L15.2,394.6Z" fill="#333" />
<path d="M22.6,128.2L24.6,127.3L32.6,135.3L30.4,137Z" fill="#b86a38" stroke="#3a2a20" stroke-width="0.8" />
<path d="M29,133.6L30.8,132L32.6,135.3L30.4,137Z" fill="#e8d0b8" stroke="#3a2a20" stroke-width="0.5" />
<path d="M22.4,138.3L33.2,138.3" stroke="#15171d" stroke-width="1.1" fill="none" />
<path d="M27.3,144L27.3,153.4" stroke="#15171d" stroke-width="1.1" fill="none" />
<path d="M22.8,148.6L31.8,148.6" stroke="#15171d" stroke-width="1.1" fill="none" />
<path d="M27.3,142.8L25.5,145.2L29.1,145.2Z" fill="#15171d" />
<path d="M27.3,154.4L25.5,152L29.1,152Z" fill="#15171d" />
<path d="M21.6,148.6L24,146.8L24,150.4Z" fill="#15171d" />
<path d="M33,148.6L30.6,146.8L30.6,150.4Z" fill="#15171d" />
<circle cx="29.6" cy="160.6" r="2.2" fill="#e4f0fa" stroke="#3a80d0" stroke-width="1" />
<circle cx="27.4" cy="162.6" r="2.2" fill="#e4f0fa" stroke="#3a80d0" stroke-width="1" />
<path d="M23,164H27Q27.2,168 24.6,168Q22.4,168 23,164Z" fill="none" stroke="#7a7e88" stroke-width="0.9" />
<rect x="28.6" y="165.6" width="4" height="1.5" fill="#111" />
<circle cx="27.3" cy="178.8" r="4.4" fill="none" stroke="#2a2d38" stroke-width="1.1" />
<circle cx="27.3" cy="178.8" r="1" fill="#2a2d38" />
<path d="M26.6,172.8L29.6,174.4L26.8,175.8Z" fill="#2a2d38" />
<path d="M26.3,188.3V196.5H22.3Z" fill="#4a5468" stroke="#2a3040" stroke-width="0.7" />
<path d="M28.3,188.3V196.5H32.3Z" fill="#a8d4f2" stroke="#2a80c8" stroke-width="0.9" />
<rect x="22.4" y="202.7" width="4" height="4" fill="#e4f0fa" stroke="#4a88c8" stroke-width="1" />
<rect x="28.2" y="202.7" width="4" height="4" fill="#e4f0fa" stroke="#4a88c8" stroke-width="1" />
<rect x="22.4" y="208.7" width="4" height="4" fill="#f0f2f6" stroke="#8a96a8" stroke-width="1" />
<rect x="28.2" y="208.7" width="4" height="4" fill="#f0f2f6" stroke="#8a96a8" stroke-width="1" />
<rect x="22.4" y="217.4" width="10" height="9.5" fill="#a8d0f0" stroke="#4a80c0" stroke-width="1" />
<rect x="22.9" y="217.9" width="9" height="4.6" fill="#f4f9fd" />
<rect x="23" y="218" width="4.2" height="4.2" fill="#fff" stroke="#8a96a8" stroke-width="0.6" />
<rect x="22.6" y="232.6" width="9.6" height="9.6" fill="#f6f8fc" />
<path d="M22.6,242.2V232.6H32.2" fill="none" stroke="#3a70c0" stroke-width="1.1" stroke-dasharray="1.6 1.2"/>
<path d="M32.2,232.6V242.2H22.6" fill="none" stroke="#2a3040" stroke-width="1.4" />
<path d="M24,248.6L28.8,256.6" stroke="#5a80a8" stroke-width="1" fill="none" />
<path d="M22,252.4L32.3,252.4" stroke="#a8c0d8" stroke-width="0.9" fill="none" />
<path d="M27,263L32.2,271.5" stroke="#4a6a98" stroke-width="1" fill="none" />
<path d="M22.5,267L29,267" stroke="#2a3040" stroke-width="1" fill="none" stroke-dasharray="1.5 1"/>
<path d="M22.6,286.5V277.5H29L32.3,286.5Z" fill="#e8f2fa" stroke="#2a3a58" stroke-width="1" />
<path d="M24,284L29,284" stroke="#111" stroke-width="1.1" fill="none" />
<path d="M28.5,282.3L30.9,284L28.5,285.7Z" fill="#111" />
<path d="M22.6,286.7L32.3,286.7" stroke="#3a90d0" stroke-width="0.8" fill="none" />
<path d="M26,293.8H22.7V300.8H32.2V293.8H29" fill="#fafbfd" stroke="#2a2d38" stroke-width="1.2" />
<path d="M26,292.5L26,294.6" stroke="#2a2d38" stroke-width="1" fill="none" />
<path d="M29,292.5L29,294.6" stroke="#2a2d38" stroke-width="1" fill="none" />
<rect x="23.5" y="308.4" width="6" height="6.2" fill="#d0e6f8" stroke="#2a70c0" stroke-width="1" rx="1.6" />
<rect x="26.6" y="309.4" width="6" height="5.2" fill="#e4f0fa" stroke="#2a70c0" stroke-width="1" rx="1.6" />
<path d="M22.4,310.6L22.4,313" stroke="#2a70c0" stroke-width="0.9" fill="none" />
<path d="M22,321.2L33,321.2" stroke="#c0cde0" stroke-width="0.8" fill="none" />
<path d="M24.4,326.6L26.2,325.5L31,329.5L29.4,331Z" fill="#e8a834" stroke="#8a6010" stroke-width="0.6" />
<path d="M29.4,331L31,329.5L31.6,331.6Z" fill="#f0d8b0" stroke="#8a6010" stroke-width="0.4" />
<path d="M23,334L32.5,334" stroke="#15171d" stroke-width="1" fill="none" />
<path d="M23,330.8L23,337.3" stroke="#15171d" stroke-width="1.1" fill="none" />
<path d="M32.5,330.8L32.5,337.3" stroke="#15171d" stroke-width="1.1" fill="none" />
<path d="M25.6,342L25.6,348" stroke="#111" stroke-width="1.2" fill="none" />
<path d="M32,342L32,348" stroke="#111" stroke-width="1.2" fill="none" />
<path d="M23,345L33.4,345" stroke="#111" stroke-width="1" fill="none" />
<path d="M25.8,345L27.6,343.8L27.6,346.2Z" fill="#111" />
<path d="M31.8,345L30,343.8L30,346.2Z" fill="#111" />
<rect x="22.4" y="349.6" width="3.6" height="1.6" fill="#3a70c0" />
<rect x="26.6" y="350" width="2" height="1.2" fill="#3a70c0" />
<path d="M29.6,349.6L30.6,351.2L32,348.6" fill="none" stroke="#2a3040" stroke-width="0.8" />
<rect x="24.6" y="356.8" width="8" height="8.2" fill="#e8eef8" stroke="#6a7a98" stroke-width="0.8" />
<rect x="27" y="357.8" width="5" height="4.6" fill="#3a62b4" />
<path d="M21.8,362L26,364.4L30.6,362.4L28,366.6H24Z" fill="#d8853a" stroke="#8a4a10" stroke-width="0.5" />
<rect x="23" y="376" width="8" height="4.2" fill="#e4e6ea" stroke="#3a3d46" stroke-width="0.9" />
<rect x="22.4" y="380" width="10.4" height="2" fill="#3a3d46" />
<path d="M28,373L32.6,373" stroke="#5a5e68" stroke-width="1.3" fill="none" />
<path d="M30.4,373L30.4,379" stroke="#5a5e68" stroke-width="1.3" fill="none" />
<circle cx="25" cy="374.4" r="0.9" fill="#111" /></svg>
<div class="a" style="left:52px;top:99.6px;width:548px;height:396.4px;background:#000"></div>
<svg class="a" style="left:0;top:0" width="600" height="496" viewBox="0 0 600 496">
<path d="M123.3,302.3H524.2" stroke="#4e0a0c" stroke-width="1.1" stroke-dasharray="41.4 6.6 6.6 6.4" stroke-dashoffset="2.6" fill="none"/>
<path d="M123.3,303.15H524.2" stroke="#ba2e38" stroke-width="1.1" stroke-dasharray="41.4 6.6 6.6 6.4" stroke-dashoffset="2.6" fill="none"/>
<path d="M324.6,103.8V277M324.6,281V291.7M324.6,296.5V330M324.6,334.5V340M324.6,345V387M324.6,391.5V496" stroke="#86262e" stroke-width="1.05" fill="none"/>
<path d="M471.5,302.6 471.5,302.0 471.5,301.3 471.5,300.7 471.6,300.0 472.0,299.4 472.9,298.7 474.3,298.0 476.3,297.3 478.6,296.5 481.0,295.7 483.4,294.9 485.7,294.1 487.8,293.3 489.8,292.5 491.7,291.6 493.5,290.8 495.0,289.9 496.3,289.0 497.3,288.2 498.0,287.4 498.3,286.6 498.5,285.8 498.5,285.0 498.4,284.3 498.3,283.5 498.2,282.7 498.1,282.0 498.0,281.2 497.9,280.5 497.8,279.7 497.6,279.0 497.2,278.3 496.5,277.6 495.5,277.0 494.2,276.4 492.6,275.9 490.9,275.4 488.9,275.0 486.8,274.6 484.6,274.3 482.3,274.0 479.8,273.7 477.3,273.5 474.8,273.3 472.5,273.1 470.6,272.8 469.3,272.4 468.6,271.9 468.2,271.3 468.0,270.7 467.9,270.0 467.7,269.4 467.6,268.8 467.4,268.2 467.3,267.5 467.1,266.9 467.0,266.3 467.2,265.6 467.7,264.8 468.8,263.8 470.4,262.7 472.3,261.5 474.5,260.2 476.7,258.8 478.7,257.5 480.6,256.2 482.5,254.9 484.1,253.6 485.7,252.4 487.0,251.2 488.2,250.0 489.1,249.0 489.7,248.0 489.9,247.1 489.9,246.3 489.8,245.5 489.5,244.8 489.3,244.1 489.0,243.3 488.8,242.6 488.5,241.9 488.2,241.2 488.0,240.5 487.6,239.8 487.1,239.2 486.4,238.6 485.4,238.2 484.1,237.9 482.5,237.8 480.7,237.7 478.8,237.7 476.7,237.8 474.5,237.9 472.2,238.2 469.8,238.5 467.3,238.8 464.8,239.2 462.4,239.5 460.4,239.7 458.8,239.7 457.8,239.5 457.2,239.1 456.9,238.5 456.6,237.9 456.3,237.4 456.0,236.8 455.7,236.2 455.4,235.6 455.1,235.1 454.8,234.5 454.7,233.8 454.9,233.0 455.5,231.9 456.7,230.6 458.3,228.9 460.0,227.2 461.9,225.4 463.6,223.6 465.2,221.9 466.7,220.2 468.1,218.6 469.4,217.0 470.5,215.5 471.4,214.0 472.1,212.7 472.5,211.6 472.7,210.6 472.5,209.8 472.3,209.1 471.9,208.4 471.5,207.7 471.1,207.1 470.6,206.5 470.2,205.8 469.8,205.2 469.4,204.5 468.9,203.9 468.3,203.4 467.6,203.0 466.6,202.8 465.3,202.7 463.8,202.9 462.1,203.2 460.3,203.6 458.3,204.1 456.2,204.7 454.1,205.5 451.8,206.3 449.5,207.2 447.1,208.1 444.8,209.0 442.8,209.8 441.1,210.3 439.9,210.4 439.2,210.2 438.6,209.8 438.2,209.3 437.8,208.8 437.4,208.3 437.0,207.8 436.6,207.3 436.2,206.8 435.7,206.3 435.4,205.7 435.3,205.0 435.5,203.9 436.2,202.4 437.3,200.6 438.5,198.6 439.9,196.4 441.2,194.3 442.4,192.2 443.5,190.2 444.5,188.2 445.4,186.4 446.2,184.6 446.8,183.0 447.3,181.5 447.5,180.2 447.5,179.1 447.3,178.3 446.9,177.6 446.4,177.0 445.8,176.5 445.3,175.9 444.7,175.4 444.1,174.9 443.6,174.4 443.0,173.8 442.4,173.3 441.8,172.9 441.0,172.6 440.1,172.5 438.9,172.7 437.6,173.1 436.0,173.7 434.4,174.5 432.6,175.5 430.7,176.5 428.8,177.7 426.8,178.9 424.8,180.3 422.7,181.8 420.7,183.2 418.8,184.5 417.2,185.5 415.9,186.0 415.0,186.1 414.3,185.9 413.8,185.6 413.3,185.2 412.8,184.8 412.3,184.4 411.7,184.0 411.2,183.6 410.7,183.3 410.2,182.8 409.9,182.2 409.8,181.3 410.0,179.8 410.5,177.9 411.2,175.7 412.0,173.3 412.8,170.9 413.5,168.6 414.2,166.4 414.7,164.2 415.2,162.2 415.6,160.2 415.9,158.4 416.0,156.8 416.0,155.4 415.8,154.3 415.4,153.4 414.9,152.8 414.3,152.3 413.7,151.9 413.0,151.5 412.3,151.1 411.7,150.7 411.0,150.4 410.3,150.0 409.7,149.6 409.0,149.3 408.2,149.1 407.3,149.2 406.2,149.5 405.1,150.1 403.7,151.0 402.3,152.1 400.8,153.4 399.3,154.8 397.7,156.3 396.1,158.0 394.4,159.7 392.8,161.6 391.1,163.5 389.5,165.3 388.1,166.8 386.9,167.8 386.0,168.2 385.2,168.3 384.6,168.1 384.0,167.9 383.4,167.6 382.8,167.3 382.2,167.1 381.6,166.8 381.0,166.6 380.5,166.3 379.9,165.9 379.5,165.1 379.3,163.9 379.3,162.1 379.5,159.9 379.7,157.4 380.0,154.8 380.2,152.4 380.3,150.0 380.4,147.8 380.4,145.6 380.3,143.6 380.2,141.7 380.0,140.0 379.7,138.6 379.3,137.4 378.7,136.6 378.1,136.0 377.4,135.6 376.7,135.4 376.0,135.1 375.3,134.9 374.5,134.7 373.8,134.5 373.1,134.3 372.3,134.0 371.6,133.9 370.8,133.8 370.0,134.0 369.1,134.5 368.1,135.2 367.0,136.3 365.9,137.6 364.8,139.2 363.6,140.8 362.4,142.6 361.2,144.6 360.0,146.6 358.8,148.8 357.6,151.1 356.4,153.2 355.3,155.2 354.4,156.6 353.5,157.4 352.8,157.8 352.1,157.8 351.5,157.7 350.9,157.6 350.2,157.5 349.6,157.3 349.0,157.2 348.3,157.1 347.7,157.0 347.1,156.8 346.5,156.3 346.0,155.3 345.6,153.7 345.2,151.7 344.9,149.3 344.5,146.8 344.1,144.3 343.7,141.9 343.3,139.7 342.8,137.5 342.3,135.5 341.8,133.7 341.2,132.0 340.6,130.6 339.9,129.4 339.2,128.6 338.5,128.1 337.8,127.9 337.0,127.7 336.2,127.7 335.5,127.6 334.7,127.6 333.9,127.5 333.2,127.5 332.4,127.5 331.6,127.4 330.9,127.5 330.1,127.8 329.3,128.4 328.5,129.2 327.8,130.4 327.0,131.9 326.2,133.6 325.5,135.4 324.7,137.4 324.0,139.5 323.3,141.8 322.6,144.1 322.0,146.6 321.3,149.0 320.7,151.2 320.1,153.0 319.5,154.2 318.8,154.9 318.2,155.2 317.6,155.2 316.9,155.3 316.3,155.3 315.6,155.3 315.0,155.4 314.4,155.4 313.7,155.5 313.1,155.4 312.4,155.2 311.7,154.5 310.9,153.3 310.1,151.5 309.2,149.4 308.3,147.0 307.4,144.7 306.5,142.4 305.5,140.3 304.6,138.3 303.6,136.4 302.6,134.7 301.7,133.1 300.8,131.8 299.8,130.7 299.0,130.0 298.1,129.6 297.3,129.4 296.6,129.4 295.8,129.5 295.1,129.7 294.3,129.8 293.6,129.9 292.8,130.0 292.0,130.2 291.3,130.3 290.6,130.6 289.9,130.9 289.2,131.5 288.6,132.5 288.1,133.7 287.7,135.2 287.3,137.0 287.0,138.9 286.7,141.0 286.5,143.2 286.3,145.5 286.1,147.9 286.1,150.4 286.0,152.9 285.9,155.3 285.8,157.4 285.5,158.9 285.1,159.8 284.6,160.4 284.0,160.6 283.3,160.8 282.7,161.0 282.1,161.2 281.5,161.4 280.9,161.5 280.3,161.7 279.6,161.9 279.0,161.9 278.2,161.6 277.2,160.8 276.1,159.4 274.8,157.6 273.4,155.5 271.9,153.4 270.5,151.4 269.0,149.5 267.6,147.8 266.3,146.1 264.9,144.6 263.6,143.2 262.4,142.1 261.2,141.2 260.2,140.5 259.2,140.2 258.4,140.2 257.6,140.3 256.9,140.6 256.2,140.9 255.5,141.2 254.8,141.5 254.1,141.8 253.4,142.1 252.7,142.4 252.0,142.8 251.4,143.2 250.8,143.9 250.4,144.8 250.2,146.1 250.1,147.6 250.1,149.3 250.2,151.2 250.3,153.2 250.6,155.4 250.9,157.6 251.3,160.0 251.8,162.4 252.3,164.9 252.8,167.3 253.2,169.5 253.4,171.2 253.3,172.4 253.0,173.1 252.5,173.6 251.9,173.9 251.4,174.2 250.8,174.5 250.3,174.9 249.7,175.2 249.1,175.5 248.6,175.8 248.0,176.1 247.2,176.0 246.2,175.6 244.9,174.7 243.2,173.3 241.4,171.7 239.5,170.0 237.7,168.4 235.8,166.8 234.0,165.4 232.3,164.1 230.6,162.8 229.0,161.8 227.5,160.9 226.1,160.2 224.9,159.7 223.8,159.5 223.0,159.6 222.2,159.9 221.6,160.3 220.9,160.7 220.3,161.2 219.7,161.6 219.1,162.1 218.5,162.6 217.9,163.0 217.3,163.5 216.7,164.1 216.3,164.8 216.1,165.7 216.0,166.9 216.2,168.3 216.5,169.9 217.0,171.7 217.6,173.6 218.4,175.6 219.2,177.7 220.1,179.8 221.1,182.1 222.1,184.4 223.2,186.7 224.2,188.8 224.8,190.5 225.1,191.8 225.1,192.8 224.8,193.4 224.4,193.9 223.9,194.3 223.4,194.7 222.9,195.2 222.5,195.6 222.0,196.1 221.5,196.5 221.0,196.9 220.4,197.1 219.4,197.1 218.0,196.6 216.3,195.8 214.2,194.7 212.0,193.5 209.8,192.3 207.6,191.2 205.5,190.1 203.5,189.2 201.5,188.4 199.7,187.7 198.0,187.1 196.4,186.7 195.0,186.5 193.9,186.5 193.0,186.7 192.3,187.1 191.7,187.6 191.2,188.1 190.7,188.7 190.2,189.3 189.7,189.9 189.2,190.5 188.7,191.1 188.2,191.7 187.8,192.3 187.5,193.0 187.4,193.9 187.5,195.0 187.9,196.3 188.6,197.7 189.4,199.3 190.4,201.0 191.5,202.8 192.8,204.6 194.1,206.5 195.6,208.4 197.1,210.4 198.7,212.4 200.1,214.3 201.3,215.9 202.1,217.3 202.4,218.3 202.4,219.0 202.1,219.6 201.7,220.1 201.4,220.7 201.0,221.2 200.6,221.7 200.3,222.3 199.9,222.8 199.6,223.3 199.1,223.8 198.3,224.0 197.0,224.0 195.3,223.7 193.1,223.2 190.7,222.5 188.2,221.8 185.8,221.2 183.5,220.7 181.3,220.2 179.2,219.8 177.2,219.5 175.3,219.3 173.6,219.2 172.1,219.3 170.9,219.5 170.0,219.9 169.3,220.4 168.9,221.0 168.5,221.6 168.1,222.3 167.8,223.0 167.4,223.7 167.1,224.4 166.7,225.0 166.4,225.7 166.1,226.4 165.9,227.2 165.9,228.1 166.2,229.0 166.8,230.1 167.7,231.4 168.8,232.7 170.1,234.1 171.6,235.5 173.1,237.0 174.8,238.5 176.7,240.1 178.6,241.6 180.6,243.2 182.5,244.7 184.2,246.1 185.5,247.3 186.2,248.3 186.4,249.1 186.3,249.7 186.1,250.3 185.8,250.9 185.6,251.5 185.4,252.2 185.2,252.8 185.0,253.4 184.7,254.0 184.4,254.5 183.8,255.0 182.8,255.3 181.2,255.5 179.0,255.5 176.6,255.4 174.1,255.3 171.6,255.3 169.2,255.3 166.9,255.3 164.7,255.4 162.6,255.6 160.7,255.8 159.0,256.1 157.5,256.4 156.2,256.9 155.3,257.4 154.7,258.0 154.3,258.7 154.1,259.4 153.9,260.2 153.7,260.9 153.5,261.7 153.3,262.4 153.1,263.2 153.0,263.9 152.8,264.7 152.8,265.4 152.9,266.2 153.3,267.1 154.0,268.0 155.1,269.0 156.4,270.0 157.9,271.1 159.6,272.1 161.4,273.2 163.4,274.3 165.5,275.4 167.7,276.4 170.0,277.5 172.3,278.6 174.3,279.6 176.0,280.5 177.1,281.3 177.6,282.0 177.8,282.7 177.8,283.3 177.7,284.0 177.6,284.6 177.5,285.3 177.4,285.9 177.4,286.5 177.3,287.2 177.2,287.8 176.8,288.4 176.0,289.0 174.7,289.5 172.8,290.0 170.5,290.5 168.1,291.0 165.6,291.5 163.2,292.1 160.9,292.6 158.8,293.2 156.8,293.8 154.9,294.5 153.2,295.1 151.7,295.8 150.5,296.5 149.7,297.3 149.1,298.0 148.8,298.8 148.7,299.5 148.7,300.3 148.7,301.1 148.7,301.8 148.7,302.6 148.7,303.4 148.7,304.1 148.7,304.9 148.8,305.7 149.0,306.4 149.5,307.2 150.3,307.9 151.4,308.6 152.9,309.3 154.5,310.0 156.4,310.7 158.3,311.3 160.5,311.9 162.7,312.5 165.1,313.0 167.5,313.5 170.0,314.0 172.3,314.5 174.3,315.0 175.8,315.6 176.6,316.1 177.1,316.7 177.2,317.4 177.3,318.0 177.4,318.7 177.4,319.3 177.5,319.9 177.6,320.6 177.7,321.2 177.8,321.9 177.6,322.5 177.2,323.2 176.2,324.0 174.7,324.9 172.6,325.9 170.4,326.9 168.1,328.0 165.8,329.1 163.7,330.1 161.7,331.2 159.9,332.3 158.1,333.3 156.6,334.4 155.2,335.4 154.1,336.4 153.3,337.3 152.8,338.2 152.7,339.0 152.7,339.8 152.8,340.6 153.0,341.3 153.1,342.0 153.3,342.8 153.5,343.5 153.7,344.3 153.9,345.0 154.1,345.8 154.4,346.4 155.0,347.1 155.9,347.7 157.0,348.1 158.5,348.5 160.2,348.8 162.1,349.0 164.1,349.2 166.3,349.3 168.5,349.4 170.9,349.4 173.4,349.4 176.0,349.3 178.4,349.2 180.6,349.2 182.4,349.3 183.5,349.6 184.2,350.1 184.5,350.6 184.7,351.2 185.0,351.8 185.2,352.4 185.4,353.0 185.6,353.7 185.8,354.3 186.1,354.9 186.2,355.5 186.0,356.3 185.4,357.2 184.3,358.3 182.7,359.7 180.8,361.2 178.8,362.8 176.8,364.3 175.0,365.9 173.2,367.4 171.6,368.9 170.2,370.3 168.8,371.7 167.7,373.0 166.7,374.3 166.1,375.4 165.7,376.4 165.7,377.3 165.8,378.1 166.1,378.8 166.4,379.5 166.7,380.2 167.1,380.8 167.4,381.5 167.8,382.2 168.1,382.9 168.5,383.6 168.9,384.2 169.6,384.7 170.4,385.1 171.6,385.4 173.0,385.4 174.7,385.4 176.5,385.2 178.5,384.9 180.6,384.6 182.8,384.1 185.1,383.6 187.4,383.0 189.9,382.4 192.3,381.7 194.5,381.2 196.4,380.8 197.8,380.7 198.7,380.9 199.2,381.3 199.6,381.9 199.9,382.4 200.3,382.9 200.6,383.5 201.0,384.0 201.4,384.5 201.7,385.1 202.0,385.7 202.1,386.4 201.9,387.3 201.2,388.6 200.1,390.2 198.7,392.0 197.1,394.0 195.5,395.9 194.1,397.9 192.7,399.8 191.4,401.6 190.3,403.4 189.2,405.1 188.4,406.7 187.7,408.1 187.2,409.5 187.0,410.6 187.1,411.5 187.3,412.3 187.7,412.9 188.2,413.5 188.7,414.1 189.2,414.7 189.7,415.3 190.2,415.9 190.7,416.5 191.2,417.1 191.7,417.6 192.4,418.0 193.3,418.3 194.4,418.3 195.7,418.1 197.2,417.8 198.9,417.2 200.8,416.5 202.7,415.7 204.7,414.8 206.8,413.8 208.9,412.7 211.2,411.6 213.4,410.4 215.5,409.2 217.3,408.3 218.8,407.8 219.8,407.7 220.5,407.9 221.1,408.3 221.5,408.7 222.0,409.1 222.5,409.6 222.9,410.0 223.4,410.5 223.9,410.9 224.3,411.4 224.7,411.9 224.8,412.8 224.6,414.0 223.9,415.7 223.0,417.7 222.0,420.0 220.9,422.3 219.8,424.5 218.9,426.7 218.1,428.8 217.3,430.8 216.7,432.8 216.2,434.6 215.8,436.2 215.6,437.7 215.6,438.9 215.8,439.9 216.2,440.6 216.7,441.2 217.3,441.7 217.9,442.2 218.5,442.6 219.1,443.1 219.7,443.6 220.3,444.0 220.9,444.5 221.6,444.9 222.3,445.2 223.1,445.3 224.2,445.2 225.4,444.8 226.7,444.2 228.2,443.3 229.8,442.3 231.5,441.1 233.2,439.8 235.0,438.4 236.8,436.8 238.7,435.2 240.6,433.5 242.4,431.9 244.1,430.4 245.5,429.4 246.6,428.9 247.4,428.8 248.0,429.0 248.6,429.4 249.1,429.7 249.7,430.0 250.2,430.3 250.8,430.7 251.4,431.0 251.9,431.3 252.4,431.7 252.8,432.4 252.9,433.5 252.8,435.1 252.4,437.2 252.0,439.5 251.4,442.0 250.9,444.5 250.5,446.8 250.1,449.1 249.9,451.3 249.7,453.3 249.5,455.3 249.5,457.0 249.6,458.6 249.8,459.9 250.2,460.9 250.7,461.6 251.3,462.1 252.0,462.5 252.7,462.8 253.4,463.1 254.1,463.4 254.8,463.7 255.5,464.0 256.2,464.3 256.9,464.6 257.7,464.8 258.5,464.8 259.4,464.5 260.4,464.0 261.6,463.1 262.8,462.0 264.1,460.7 265.4,459.2 266.8,457.6 268.2,455.8 269.7,454.0 271.1,452.0 272.6,449.9 274.0,447.8 275.3,446.0 276.5,444.5 277.5,443.6 278.3,443.2 279.0,443.1 279.6,443.3 280.3,443.5 280.9,443.7 281.5,443.8 282.1,444.0 282.7,444.2 283.3,444.4 283.9,444.6 284.5,445.1 284.9,446.0 285.2,447.4 285.4,449.3 285.5,451.6 285.5,454.2 285.6,456.7 285.7,459.1 285.9,461.5 286.1,463.7 286.3,465.8 286.6,467.7 287.0,469.5 287.4,471.1 287.9,472.4 288.5,473.4 289.1,474.0 289.8,474.5 290.5,474.7 291.3,474.9 292.0,475.0 292.8,475.2 293.6,475.3 294.3,475.4 295.1,475.5 295.8,475.7 296.6,475.7 297.4,475.6 298.2,475.2 299.1,474.6 300.0,473.6 300.9,472.3 301.9,470.8 302.8,469.1 303.8,467.2 304.7,465.3 305.7,463.2 306.7,460.9 307.6,458.6 308.5,456.2 309.4,454.0 310.3,452.2 311.0,450.8 311.7,450.1 312.4,449.7 313.1,449.7 313.7,449.7 314.4,449.8 315.0,449.8 315.6,449.9 316.3,449.9 316.9,449.9 317.6,450.0 318.2,450.2 318.8,450.8 319.4,451.8 320.0,453.5 320.7,455.7 321.3,458.1 321.9,460.6 322.6,463.0 323.3,465.2 324.0,467.4 324.7,469.4 325.5,471.3 326.2,473.0 327.0,474.5 327.8,475.8 328.6,476.7 329.3,477.3 330.1,477.7 330.9,477.8 331.6,477.8 332.4,477.7 333.2,477.7 333.9,477.7 334.7,477.6 335.5,477.6 336.2,477.5 337.0,477.4 337.7,477.2 338.5,476.8 339.2,476.0 339.8,474.9 340.5,473.6 341.1,471.9 341.6,470.1 342.1,468.2 342.6,466.0 343.1,463.8 343.5,461.5 343.9,459.0 344.3,456.5 344.6,454.0 345.0,451.9 345.4,450.2 345.9,449.1 346.5,448.5 347.1,448.3 347.7,448.2 348.3,448.1 349.0,448.0 349.6,447.9 350.2,447.7 350.9,447.6 351.5,447.5 352.2,447.5 352.9,447.8 353.7,448.5 354.6,449.9 355.7,451.7 356.8,453.8 358.0,456.1 359.2,458.3 360.4,460.3 361.6,462.3 362.8,464.2 364.0,465.9 365.1,467.4 366.2,468.8 367.3,469.9 368.3,470.8 369.2,471.3 370.0,471.5 370.8,471.5 371.6,471.4 372.3,471.2 373.1,470.9 373.8,470.7 374.5,470.5 375.3,470.3 376.0,470.1 376.7,469.8 377.4,469.5 378.0,468.9 378.6,468.2 379.0,467.1 379.4,465.7 379.6,464.0 379.7,462.2 379.8,460.2 379.8,458.1 379.8,455.8 379.7,453.5 379.5,451.0 379.3,448.5 379.1,446.0 378.9,443.7 378.8,441.8 379.0,440.5 379.4,439.6 379.9,439.2 380.4,438.9 381.0,438.6 381.6,438.4 382.2,438.1 382.8,437.9 383.4,437.6 384.0,437.3 384.6,437.1 385.3,437.2 386.2,437.5 387.3,438.4 388.7,439.8 390.3,441.5 391.9,443.4 393.6,445.3 395.3,447.1 396.9,448.8 398.5,450.4 400.0,451.8 401.5,453.1 402.9,454.2 404.3,455.2 405.5,455.9 406.6,456.2 407.5,456.4 408.3,456.2 409.0,455.9 409.7,455.6 410.3,455.2 411.0,454.8 411.7,454.5 412.3,454.1 413.0,453.7 413.6,453.3 414.3,452.8 414.8,452.2 415.2,451.4 415.4,450.4 415.5,449.0 415.4,447.4 415.1,445.7 414.8,443.8 414.3,441.7 413.8,439.6 413.2,437.3 412.5,435.0 411.7,432.6 410.9,430.2 410.2,428.0 409.6,426.0 409.3,424.5 409.4,423.4 409.7,422.8 410.2,422.3 410.7,421.9 411.2,421.6 411.7,421.2 412.3,420.8 412.8,420.4 413.3,420.0 413.8,419.6 414.4,419.4 415.3,419.4 416.4,419.8 418.0,420.8 419.9,422.0 421.9,423.5 424.0,425.0 426.0,426.3 428.0,427.6 429.9,428.8 431.8,429.9 433.6,430.9 435.2,431.7 436.8,432.4 438.2,432.8 439.4,433.1 440.4,433.0 441.2,432.8 441.9,432.4 442.5,431.9 443.0,431.4 443.6,430.8 444.1,430.3 444.7,429.8 445.3,429.3 445.8,428.7 446.3,428.2 446.8,427.5 447.0,426.7 447.1,425.7 446.9,424.4 446.5,423.0 445.9,421.4 445.2,419.6 444.3,417.8 443.3,415.8 442.2,413.8 441.1,411.8 439.8,409.6 438.4,407.5 437.1,405.4 436.0,403.5 435.3,401.9 435.0,400.8 435.0,400.0 435.3,399.4 435.7,398.9 436.2,398.4 436.6,397.9 437.0,397.4 437.4,396.9 437.8,396.4 438.2,395.9 438.7,395.5 439.5,395.3 440.5,395.3 442.1,395.7 444.1,396.4 446.3,397.3 448.7,398.3 451.0,399.2 453.3,400.0 455.5,400.8 457.6,401.4 459.5,402.0 461.4,402.4 463.2,402.8 464.7,403.0 466.0,403.0 467.1,402.8 467.8,402.4 468.4,401.9 468.9,401.3 469.4,400.7 469.8,400.0 470.2,399.4 470.6,398.7 471.1,398.1 471.5,397.5 471.9,396.8 472.2,396.1 472.3,395.3 472.2,394.3 471.9,393.2 471.2,391.9 470.4,390.5 469.3,389.0 468.1,387.5 466.7,385.8 465.2,384.1 463.6,382.4 461.9,380.6 460.1,378.8 458.4,377.1 456.8,375.4 455.5,374.0 454.8,372.9 454.5,372.0 454.6,371.3 454.8,370.7 455.1,370.1 455.4,369.6 455.7,369.0 456.0,368.4 456.3,367.8 456.6,367.3 456.9,366.7 457.5,366.3 458.4,366.0 459.8,365.9 461.8,366.1 464.1,366.4 466.6,366.8 469.1,367.2 471.5,367.5 473.8,367.7 476.0,367.9 478.1,368.0 480.1,368.1 481.9,368.0 483.6,367.9 484.9,367.6 486.0,367.2 486.8,366.7 487.3,366.1 487.7,365.4 488.0,364.7 488.2,364.0 488.5,363.3 488.8,362.6 489.0,361.9 489.3,361.1 489.5,360.4 489.7,359.7 489.7,358.9 489.5,358.0 489.0,357.0 488.2,356.0 487.1,354.8 485.8,353.6 484.3,352.4 482.6,351.1 480.8,349.8 478.9,348.5 476.9,347.2 474.8,345.8 472.6,344.5 470.6,343.3 468.9,342.1 467.7,341.1 467.1,340.3 466.9,339.6 467.0,338.9 467.1,338.3 467.3,337.7 467.4,337.0 467.6,336.4 467.7,335.8 467.9,335.2 468.0,334.5 468.3,333.9 469.0,333.4 470.2,333.0 472.0,332.7 474.2,332.5 476.7,332.3 479.2,332.1 481.7,331.8 484.0,331.5 486.3,331.2 488.4,330.8 490.4,330.4 492.2,330.0 493.8,329.5 495.2,329.0 496.3,328.3 497.0,327.7 497.5,327.0 497.7,326.2 497.8,325.5 497.9,324.7 498.0,324.0 498.1,323.2 498.2,322.5 498.3,321.7 498.4,320.9 498.4,320.2 498.3,319.4 498.0,318.6 497.4,317.8 496.5,316.9 495.2,316.1 493.7,315.2 492.0,314.4 490.2,313.5 488.2,312.6 486.1,311.8 483.8,311.0 481.5,310.2 479.1,309.4 476.7,308.6 474.7,307.9 473.1,307.2 472.1,306.5 471.6,305.8 471.5,305.2 471.5,304.5 471.5,303.9 471.5,303.2Z" stroke="#fff" stroke-width="1.5" fill="none" stroke-linejoin="round"/>
<path d="M343.4,232.9 A72.3,72.3 0 1 1 304.0,233.0 L304.0,213.8 L343.4,213.8 Z" stroke="#fff" stroke-width="1.5" fill="none" stroke-linejoin="miter"/>
</svg>
<div class="a" style="left:466.4px;top:455.3px;width:128.8px;height:38.3px;background:#d0d0d6"></div>
<svg class="a" style="left:0;top:0" width="600" height="496" viewBox="0 0 600 496">
<defs>
<linearGradient id="wWarm" gradientUnits="userSpaceOnUse" x1="472" y1="470" x2="521" y2="470"><stop offset="0" stop-color="#de3340"/><stop offset=".45" stop-color="#ea5a2a"/><stop offset=".8" stop-color="#f08a1e"/><stop offset="1" stop-color="#eaa824"/></linearGradient>
<linearGradient id="wCool" gradientUnits="userSpaceOnUse" x1="468" y1="468" x2="516" y2="486"><stop offset="0" stop-color="#16245f"/><stop offset=".3" stop-color="#1f4aa8"/><stop offset=".65" stop-color="#2a8fe0"/><stop offset="1" stop-color="#5cc0f0"/></linearGradient>
<linearGradient id="wX" gradientUnits="userSpaceOnUse" x1="478" y1="466" x2="496" y2="486"><stop offset="0" stop-color="#173a8c"/><stop offset="1" stop-color="#2c78d8"/></linearGradient>
<linearGradient id="wS" gradientUnits="userSpaceOnUse" x1="496" y1="465" x2="508" y2="486"><stop offset="0" stop-color="#f08a1e"/><stop offset="1" stop-color="#e2402a"/></linearGradient>
<clipPath id="cUp"><path d="M440,464.4L550,483.6V440H440Z"/></clipPath>
<clipPath id="cDn"><path d="M440,464.4L550,483.6V500H440Z"/></clipPath>
</defs>
<g clip-path="url(#cUp)"><path fill="url(#wWarm)" fill-rule="evenodd" transform="rotate(-21 494.6 474)" d="M466.6,474a28,15.6 0 1 0 56,0a28,15.6 0 1 0 -56,0ZM472.4,474.4a22,14.3 0 1 0 44,0a22,14.3 0 1 0 -44,0Z"/></g>
<g clip-path="url(#cDn)"><path fill="url(#wCool)" fill-rule="evenodd" transform="rotate(-21 494.6 474)" d="M466.6,474a28,15.6 0 1 0 56,0a28,15.6 0 1 0 -56,0ZM472.4,474.4a22,14.3 0 1 0 44,0a22,14.3 0 1 0 -44,0Z"/></g>
<circle cx="487.9" cy="461.4" r="1.9" fill="#2a55b4"/>
<text x="476.6" y="485.6" font-family="Liberation Serif,serif" font-style="italic" font-size="29" fill="url(#wX)">X</text>
<text x="494.6" y="485.4" font-family="Liberation Serif,serif" font-style="italic" font-size="29" fill="url(#wS)">S</text>
<path d="M597.4,483.5V491.6Q597.4,492.6 598.6,492.4" stroke="#b01030" stroke-width="1" fill="none" opacity=".8"/>
<path d="M476,488.5h6m3,1h5m4,-.5h7m5,0h3m6,.8h8m5,-.6h6m5,.4h7m5,0h6m6,-.3h7" stroke="#e8a0b0" stroke-width="1.6" fill="none" opacity=".28"/>
</svg>
<div class="t" style="left:522.4px;top:457.0px;font-size:24.20px;color:#1c2659;letter-spacing:-0.36px;font-weight:bold;">资料网</div>
<div class="t" style="left:522.9px;top:482.2px;font-family:'Liberation Mono',monospace;font-weight:bold;font-size:8.85px;letter-spacing:0;color:#1c2659">ZL.XS1616.COM</div>
</div>
</body></html>
